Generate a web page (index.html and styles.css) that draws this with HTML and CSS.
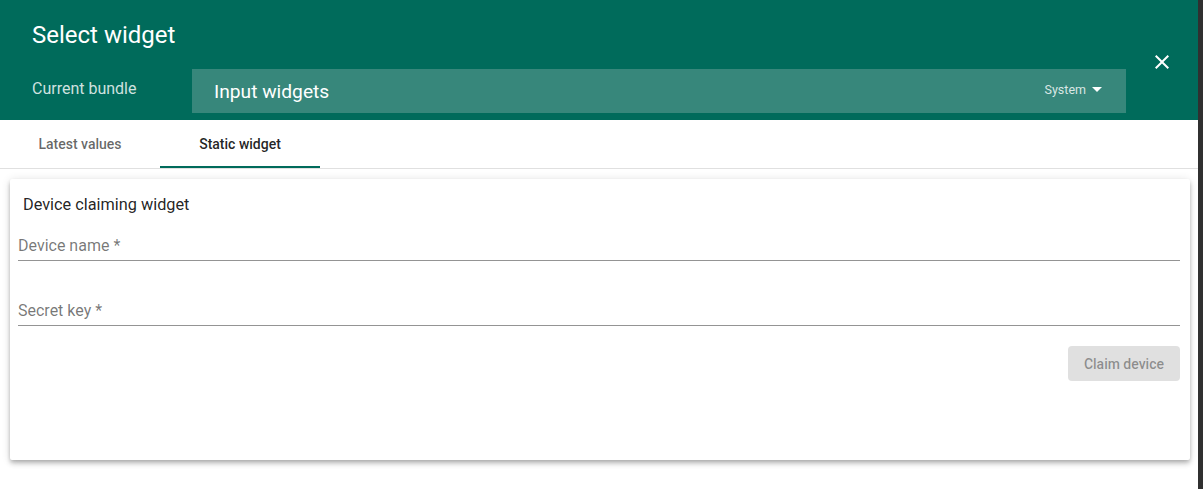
FILE: index.html
```html
<!DOCTYPE html>
<html lang="en">
<head>
<meta charset="utf-8">
<title>Select widget</title>
<link rel="stylesheet" href="styles.css">
</head>
<body>
<div class="page">
  <main class="dialog">
    <header class="dialog-header">
      <div class="header-main">
        <h1 class="dialog-title">Select widget</h1>
        <div class="bundle-row">
          <span class="bundle-label">Current bundle</span>
          <div class="bundle-select">
            <span class="bundle-name">Input widgets</span>
            <span class="bundle-scope">System <span class="caret"></span></span>
          </div>
        </div>
      </div>
      <button class="close-btn" aria-label="Close">
        <svg viewBox="0 0 24 24" width="24" height="24"><path fill="#fff" d="M19 6.41L17.59 5 12 10.59 6.41 5 5 6.41 10.59 12 5 17.59 6.41 19 12 13.41 17.59 19 19 17.59 13.41 12z"/></svg>
      </button>
    </header>
    <nav class="tabs">
      <div class="tab">Latest values</div>
      <div class="tab tab-active">Static widget</div>
    </nav>
    <section class="card">
      <div class="card-title">Device claiming widget</div>
      <div class="field field-first"><span class="field-label">Device name *</span></div>
      <div class="field field-second"><span class="field-label">Secret key *</span></div>
      <div class="actions">
        <button class="claim-btn" disabled>Claim device</button>
      </div>
    </section>
  </main>
  <aside class="scroll-strip"></aside>
</div>
</body>
</html>
```

FILE: styles.css
```css
* { box-sizing: border-box; }
html, body { margin: 0; padding: 0; height: 100%; }
body {
  font-family: Roboto, "Noto Sans", "Liberation Sans", sans-serif;
  background: #ffffff;
}
.page {
  display: flex;
  height: 489px;
}
.dialog {
  flex: 1;
  background: #ffffff;
  display: flex;
  flex-direction: column;
}
.scroll-strip {
  width: 5px;
  background: #303030;
}
.dialog-header {
  background: #006b5b;
  height: 120px;
  display: flex;
  align-items: center;
}
.header-main {
  flex: 1;
  padding: 19px 0 7px 32px;
  display: flex;
  flex-direction: column;
}
.dialog-title {
  margin: 0;
  font-size: 24px;
  font-weight: 400;
  line-height: 32px;
  color: #ffffff;
}
.bundle-row {
  display: flex;
  align-items: center;
  margin-top: 18px;
}
.bundle-label {
  width: 160px;
  font-size: 16px;
  color: rgba(255, 255, 255, 0.82);
  margin-top: -6px;
}
.bundle-select {
  flex: 1;
  height: 44px;
  background: #37877b;
  display: flex;
  align-items: center;
  padding: 0 24px 0 22px;
}
.bundle-name {
  flex: 1;
  font-size: 19.2px;
  color: #ffffff;
}
.bundle-scope {
  font-size: 12.5px;
  color: rgba(255, 255, 255, 0.82);
  display: flex;
  align-items: center;
  gap: 6px;
  margin-top: -3px;
}
.caret {
  width: 0;
  height: 0;
  border-left: 5px solid transparent;
  border-right: 5px solid transparent;
  border-top: 5px solid #ffffff;
}
.close-btn {
  width: 40px;
  height: 40px;
  margin: 4px 16px 0 16px;
  border: 0;
  background: transparent;
  padding: 0;
  display: flex;
  align-items: center;
  justify-content: center;
}
.tabs {
  display: flex;
  border-bottom: 1px solid #e0e0e0;
}
.tab {
  width: 160px;
  height: 48px;
  display: flex;
  align-items: center;
  justify-content: center;
  font-size: 14px;
  font-weight: 500;
  color: rgba(0, 0, 0, 0.6);
  border-bottom: 2px solid transparent;
  padding-top: 2px;
}
.tab-active {
  color: rgba(0, 0, 0, 0.87);
  border-bottom-color: #006b5b;
}
.card {
  margin: 10px 0 0 10px;
  width: 1180px;
  height: 281px;
  padding: 9px 10px 8px 8px;
  background: #ffffff;
  border-radius: 2px;
  box-shadow: 0 2px 4px -1px rgba(0,0,0,0.2), 0 4px 5px 0 rgba(0,0,0,0.14), 0 1px 10px 0 rgba(0,0,0,0.12);
  display: flex;
  flex-direction: column;
}
.card-title {
  padding: 5px 5px 0 5px;
  font-size: 16.3px;
  line-height: 24px;
  color: rgba(0, 0, 0, 0.87);
}
.field {
  border-bottom: 1px solid #949494;
  padding-bottom: 4px;
}
.field-first { margin-top: 19px; }
.field-second { margin-top: 40px; }
.field-label {
  display: block;
  font-size: 16px;
  line-height: 20px;
  color: rgba(0, 0, 0, 0.54);
}
.actions {
  display: flex;
  justify-content: flex-end;
  margin-top: 20px;
}
.claim-btn {
  height: 35px;
  padding: 0 16px;
  border: 0;
  border-radius: 4px;
  background: #e0e0e0;
  color: rgba(0, 0, 0, 0.38);
  font-family: Roboto, "Noto Sans", "Liberation Sans", sans-serif;
  font-size: 14px;
  font-weight: 500;
}
```
